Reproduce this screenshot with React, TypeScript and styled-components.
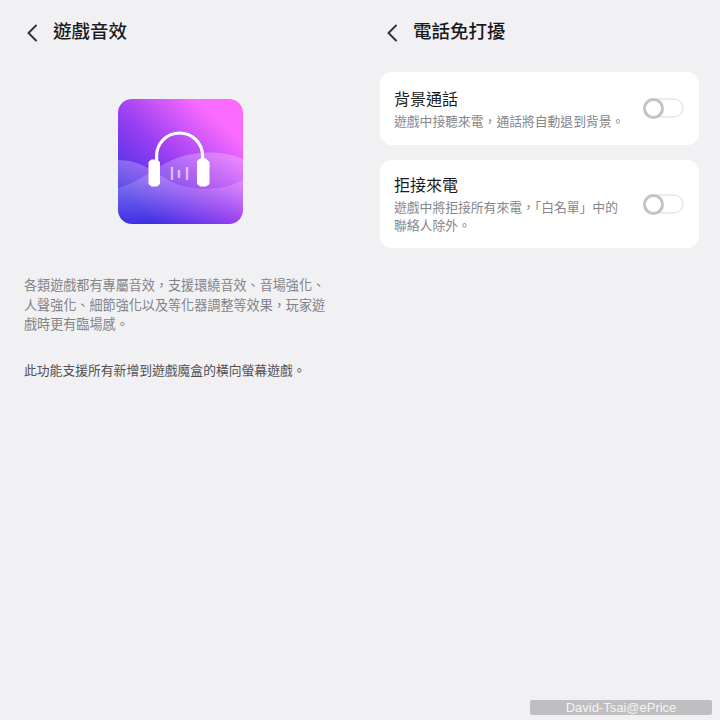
import styled, { createGlobalStyle } from "styled-components";

const GlobalStyle = createGlobalStyle`
  html, body {
    margin: 0;
    padding: 0;
    background: #f1f1f4;
    font-family: "Noto Sans CJK TC", "Liberation Sans", sans-serif;
  }
`;

const Page = styled.div`
  position: relative;
  width: 720px;
  height: 720px;
  overflow: hidden;
  display: grid;
  grid-template-columns: 360px 360px;
  background: #f1f1f4;
`;

const Pane = styled.section`
  display: flex;
  flex-direction: column;
`;

const Header = styled.header`
  display: flex;
  align-items: center;
  height: 60px;
  padding-left: 25px;
  gap: 14px;
`;

const Title = styled.h1`
  margin: 0;
  font-size: 18.5px;
  line-height: 28px;
  font-weight: 500;
  color: #1a1a1e;
`;

const BackIcon = styled.svg`
  width: 14px;
  height: 20px;
  display: block;
  margin-top: 5px;
`;

const HeroWrap = styled.div`
  display: flex;
  justify-content: center;
  margin-top: 39px;
`;

const Hero = styled.svg`
  width: 125px;
  height: 125px;
  display: block;
`;

const Copy = styled.div`
  padding: 51px 24px 0;
`;

const Paragraph = styled.p<{ $dark?: boolean }>`
  margin: 0 0 26px;
  width: 306px;
  font-size: ${(p) => (p.$dark ? "12.8px" : "13.1px")};
  line-height: 19.6px;
  color: ${(p) => (p.$dark ? "#505054" : "#838387")};
`;

const Cards = styled.div`
  display: flex;
  flex-direction: column;
  gap: 15px;
  padding: 12px 21px 0 20px;
`;

const Card = styled.div`
  display: flex;
  align-items: center;
  justify-content: space-between;
  min-height: 73px;
  box-sizing: border-box;
  background: #fff;
  border-radius: 12px;
  padding: 13px 15px 14px 14px;
`;

const CardText = styled.div`
  width: 234px;
`;

const CardTitle = styled.div`
  font-size: 16px;
  line-height: 22px;
  margin-bottom: 3px;
  color: #1c1c20;
`;

const CardDesc = styled.div`
  font-size: 12.8px;
  line-height: 18px;
  color: #85858a;
  white-space: pre-line;
`;

const Toggle = styled.div`
  position: relative;
  width: 41px;
  height: 20px;
  box-sizing: border-box;
  border: 2px solid #ececee;
  border-radius: 10px;
  flex: none;
`;

const Knob = styled.div`
  position: absolute;
  left: -2px;
  top: -2px;
  width: 21px;
  height: 21px;
  box-sizing: border-box;
  border: 3px solid #c4c4c6;
  border-radius: 50%;
  background: #fff;
`;

const Watermark = styled.div`
  position: absolute;
  left: 530px;
  top: 700px;
  width: 182px;
  height: 15px;
  border-radius: 2px;
  background: #bfbfc1;
  color: #f4f4f4;
  font-family: "Liberation Sans", sans-serif;
  font-size: 13px;
  line-height: 15px;
  text-align: center;
`;

const Back = () => (
  <BackIcon viewBox="0 0 14 20">
    <path d="M11 2.5 L3.5 10 L11 17.5" fill="none" stroke="#333338" strokeWidth="2" strokeLinecap="round" strokeLinejoin="round" />
  </BackIcon>
);

const HeadphonesTile = () => (
  <Hero viewBox="0 0 125 125">
    <defs>
      <linearGradient id="tile" x1="0.12" y1="0.95" x2="0.88" y2="0.12">
        <stop offset="0.08" stopColor="#3f2fe4" />
        <stop offset="0.5" stopColor="#9a3ff2" />
        <stop offset="0.92" stopColor="#fb6bff" />
      </linearGradient>
      <linearGradient id="wave" x1="0" y1="0" x2="0" y2="1">
        <stop offset="0" stopColor="#fff" stopOpacity="0.26" />
        <stop offset="0.55" stopColor="#fff" stopOpacity="0.12" />
        <stop offset="1" stopColor="#fff" stopOpacity="0" />
      </linearGradient>
      <clipPath id="tileClip">
        <rect width="125" height="125" rx="14" />
      </clipPath>
    </defs>
    <g clipPath="url(#tileClip)">
      <rect width="125" height="125" fill="url(#tile)" />
      <path d="M0 61 C22 61 34 72 52 82 C68 91 102 94 125 81 L125 125 L0 125 Z" fill="url(#wave)" />
      <path d="M0 89 C18 85 36 70 50 63 C68 53 100 49 125 60 L125 125 L0 125 Z" fill="url(#wave)" />
    </g>
    <path d="M38.6 62 V57 A23 23 0 0 1 84.6 57 V62" fill="none" stroke="#fff" strokeWidth="3.2" />
    <path d="M33.5 61 H39 L41.5 63 V85 L39 87 H33.5 L31 85 V63 Z" fill="#fff" stroke="#fff" strokeWidth="1" strokeLinejoin="round" />
    <path d="M82 60 H88 L91 63 V85 L88 87 H82 L79.5 85 V62 Z" fill="#fff" stroke="#fff" strokeWidth="1" strokeLinejoin="round" />
    <path d="M54 68 V81 M61 71 V79 M69 68 V81" stroke="#fff" strokeOpacity="0.6" strokeWidth="2.4" />
  </Hero>
);

const settings = [
  { title: "背景通話", desc: "遊戲中接聽來電，通話將自動退到背景。" },
  { title: "拒接來電", desc: "遊戲中將拒接所有來電，「白名單」中的\n聯絡人除外。" },
];

export default function App() {
  return (
    <Page>
      <GlobalStyle />
      <Pane>
        <Header>
          <Back />
          <Title>遊戲音效</Title>
        </Header>
        <HeroWrap>
          <HeadphonesTile />
        </HeroWrap>
        <Copy>
          <Paragraph>各類遊戲都有專屬音效，支援環繞音效、音場強化、人聲強化、細節強化以及等化器調整等效果，玩家遊戲時更有臨場感。</Paragraph>
          <Paragraph $dark>此功能支援所有新增到遊戲魔盒的橫向螢幕遊戲。</Paragraph>
        </Copy>
      </Pane>
      <Pane>
        <Header>
          <Back />
          <Title>電話免打擾</Title>
        </Header>
        <Cards>
          {settings.map((s) => (
            <Card key={s.title}>
              <CardText>
                <CardTitle>{s.title}</CardTitle>
                <CardDesc>{s.desc}</CardDesc>
              </CardText>
              <Toggle>
                <Knob />
              </Toggle>
            </Card>
          ))}
        </Cards>
      </Pane>
      <Watermark>David-Tsai@ePrice</Watermark>
    </Page>
  );
}
